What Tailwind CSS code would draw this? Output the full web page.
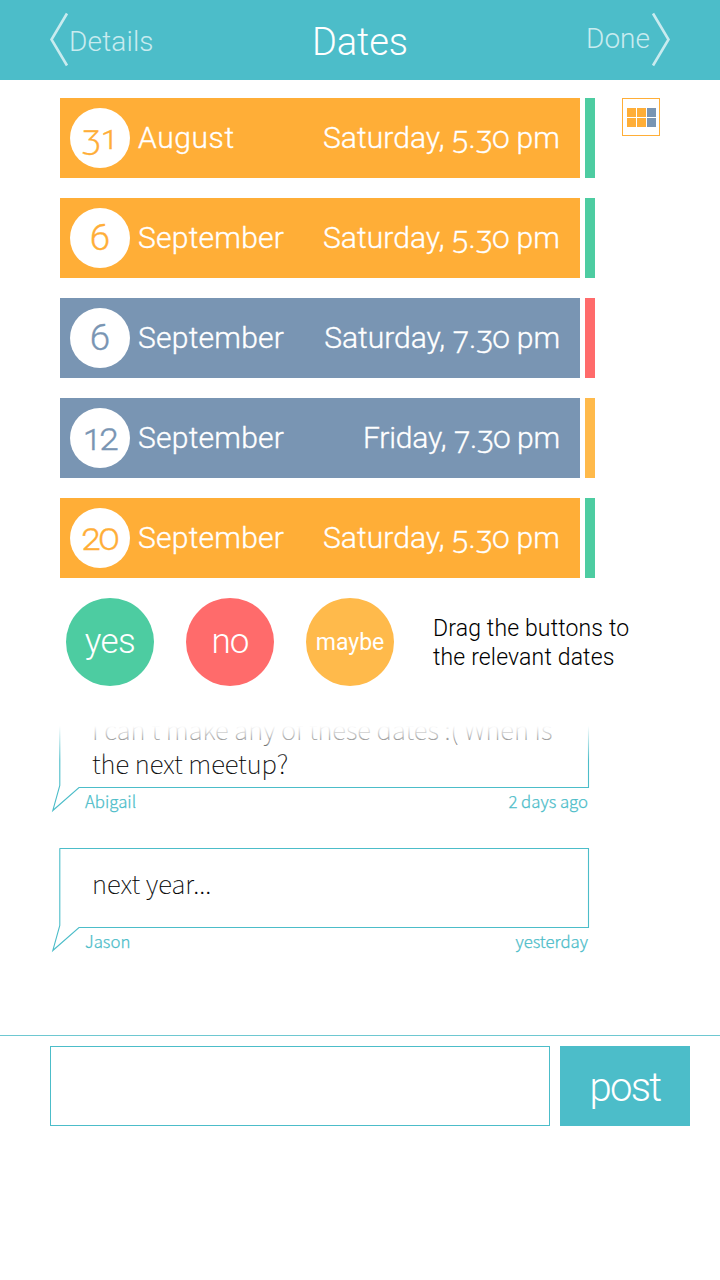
<!DOCTYPE html>
<html lang="en">
<head>
<meta charset="utf-8">
<title>Dates</title>
<script src="https://cdn.jsdelivr.net/npm/@tailwindcss/browser@4"></script>
</head>
<body class="bg-white">
<div class="w-[720px] h-[1280px] overflow-hidden flex flex-col bg-white font-['Roboto',sans-serif] font-light oldstyle-nums whitespace-nowrap">

  <header class="h-20 shrink-0 bg-[#4cbdc9] grid grid-cols-3 px-[50px] text-white">
    <a class="flex h-20 text-[28px] leading-[84px] text-[#c9ebef]">
      <svg class="w-[19px] h-20 shrink-0" viewBox="0 0 19 80" fill="none" stroke="currentColor" stroke-width="2.6"><path d="M17 13.500 1.500 39.500 17 65.500"/></svg>
      <span class="tracking-[0.15px]">Details</span>
    </a>
    <h1 class="text-center text-[38px] leading-[84px] tracking-[-0.1px]">Dates</h1>
    <a class="flex justify-end h-20 text-[28px] leading-[78px] text-[#c9ebef]">
      <span>Done</span>
      <svg class="w-5 h-20 shrink-0" viewBox="1 0 20 80" fill="none" stroke="currentColor" stroke-width="2.6"><path d="M4 13.500 19.500 39.500 4 65.500"/></svg>
    </a>
  </header>

  <main class="flex pt-[18px] pl-[60px] text-[30px] leading-[43px] text-white">
    <ul class="flex flex-col gap-5 w-[535px] [-webkit-text-stroke:0.35px]">
      <li class="flex gap-[5px] h-20">
        <div class="flex items-center w-[520px] bg-[#ffae37] pl-[10px] pr-5">
          <span class="size-[60px] rounded-full bg-white pr-[2px] text-center text-[34px] leading-[59px] tracking-[-1.500px] text-[#ffae37]">31</span>
          <span class="pl-2 pb-[2px] tracking-[0.6px]">August</span>
          <span class="ml-auto pb-[2px] tracking-[0.07px]">Saturday, 5.30 pm</span>
        </div>
        <div class="w-[10px] bg-[#4dcca1]"></div>
      </li>
      <li class="flex gap-[5px] h-20">
        <div class="flex items-center w-[520px] bg-[#ffae37] pl-[10px] pr-5">
          <span class="size-[60px] rounded-full bg-white text-center text-[37px] leading-[60px] text-[#ffae37]">6</span>
          <span class="pl-2 pb-[2px] tracking-[0.25px]">September</span>
          <span class="ml-auto pb-[2px] tracking-[0.07px]">Saturday, 5.30 pm</span>
        </div>
        <div class="w-[10px] bg-[#4dcca1]"></div>
      </li>
      <li class="flex gap-[5px] h-20">
        <div class="flex items-center w-[520px] bg-[#7995b3] pl-[10px] pr-5">
          <span class="size-[60px] rounded-full bg-white text-center text-[37px] leading-[60px] text-[#7995b3]">6</span>
          <span class="pl-2 pb-[2px] tracking-[0.25px]">September</span>
          <span class="ml-auto pb-[2px]">Saturday, 7.30 pm</span>
        </div>
        <div class="w-[10px] bg-[#ff6b6b]"></div>
      </li>
      <li class="flex gap-[5px] h-20">
        <div class="flex items-center w-[520px] bg-[#7995b3] pl-[10px] pr-5">
          <span class="size-[60px] rounded-full bg-white pr-[2px] text-center text-[36px] leading-[60px] tracking-[-2px] text-[#7995b3]">12</span>
          <span class="pl-2 pb-[2px] tracking-[0.25px]">September</span>
          <span class="ml-auto pb-[2px] tracking-[-0.15px]">Friday, 7.30 pm</span>
        </div>
        <div class="w-[10px] bg-[#ffba4b]"></div>
      </li>
      <li class="flex gap-[5px] h-20">
        <div class="flex items-center w-[520px] bg-[#ffae37] pl-[10px] pr-5">
          <span class="size-[60px] rounded-full bg-white pr-[2px] text-center text-[36px] leading-[60px] tracking-[-2px] text-[#ffae37]">20</span>
          <span class="pl-2 pb-[2px] tracking-[0.25px]">September</span>
          <span class="ml-auto pb-[2px] tracking-[0.07px]">Saturday, 5.30 pm</span>
        </div>
        <div class="w-[10px] bg-[#4dcca1]"></div>
      </li>
    </ul>
    <button class="ml-[27px] size-[38px] border border-[#ffae37] grid grid-cols-[9px_9px_9px] grid-rows-[9px_9px] gap-[1px] pl-1 pt-[9px]">
      <i class="bg-[#ffae37]"></i><i class="bg-[#ffae37]"></i><i class="bg-[#7995b3]"></i>
      <i class="bg-[#ffae37]"></i><i class="bg-[#ffae37]"></i><i class="bg-[#7995b3]"></i>
    </button>
  </main>

  <section class="flex mt-5 pl-[66px] gap-8 h-[88px] text-white text-center">
    <button class="size-[88px] rounded-full bg-[#4dcca1] text-[35px] leading-[88px] tracking-[-0.6px]">yes</button>
    <button class="size-[88px] rounded-full bg-[#ff6b6b] text-[35px] leading-[88px] tracking-[-1px]">no</button>
    <button class="size-[88px] rounded-full bg-[#ffba4b] text-[23px] leading-[87px] font-normal">maybe</button>
    <p class="ml-[7px] pt-4 text-left text-[23px] leading-[29px] text-black tracking-[0.15px]">Drag the buttons to<br>the relevant dates</p>
  </section>

  <section class="relative mt-10 h-[309px] shrink-0 overflow-hidden font-['Noto_Sans_CJK_SC',sans-serif] text-black">
    <article class="relative flow-root h-[85px]">
      <svg class="absolute left-[50px] top-0 w-[545px] h-[90px]" viewBox="0 0 545 90" fill="none" stroke="#4cbdc9" stroke-width="1.1"><path d="M9.800 0V59.500L2.800 84.500 29 61.500H538.500V0"/></svg>
      <div class="relative -mt-[14px] pl-[92px] text-[25.800px] leading-[34px] font-thin [-webkit-text-stroke:0.15px]">
        <p>I can't make any of these dates :( When is<br>the next meetup?</p>
      </div>
      <footer class="relative flex justify-between mt-[11px] pl-[85px] pr-[132px] text-[16.800px] leading-5 text-[#4cbdc9] [-webkit-text-stroke:0.25px]"><span>Abigail</span><span>2 days ago</span></footer>
    </article>
    <article class="relative flow-root mt-[35px] pt-[20px]">
      <svg class="absolute left-[50px] top-0 w-[545px] h-[108px]" viewBox="0 0 545 108" fill="none" stroke="#4cbdc9" stroke-width="1.1"><path d="M9.800 2.500V79.500L2.800 104.500 29 81.500H538.500V2.500H9.500"/></svg>
      <p class="relative pl-[92px] text-[25.800px] leading-[34px] font-thin tracking-[0.1px] [-webkit-text-stroke:0.15px]">next year...</p>
      <footer class="relative flex justify-between mt-[31px] pl-[85px] pr-[132px] text-[16.800px] leading-5 text-[#4cbdc9] [-webkit-text-stroke:0.25px]"><span>Jason</span><span>yesterday</span></footer>
    </article>
    <div class="absolute inset-x-0 top-0 h-[34px] bg-linear-to-b from-white to-white/0"></div>
  </section>

  <form class="-mt-[1px] pt-px">
    <div class="flex gap-[10px] pl-[50px] pt-[10px] border-t border-[#6ec8d1]">
      <div class="w-[500px] h-20 border border-[#4cbdc9]"></div>
      <div class="w-[130px] h-20 bg-[#4cbdc9] text-white text-center text-[40px] leading-[84px] tracking-[-1.700px]">post</div>
    </div>
  </form>
</div>
</body>
</html>
